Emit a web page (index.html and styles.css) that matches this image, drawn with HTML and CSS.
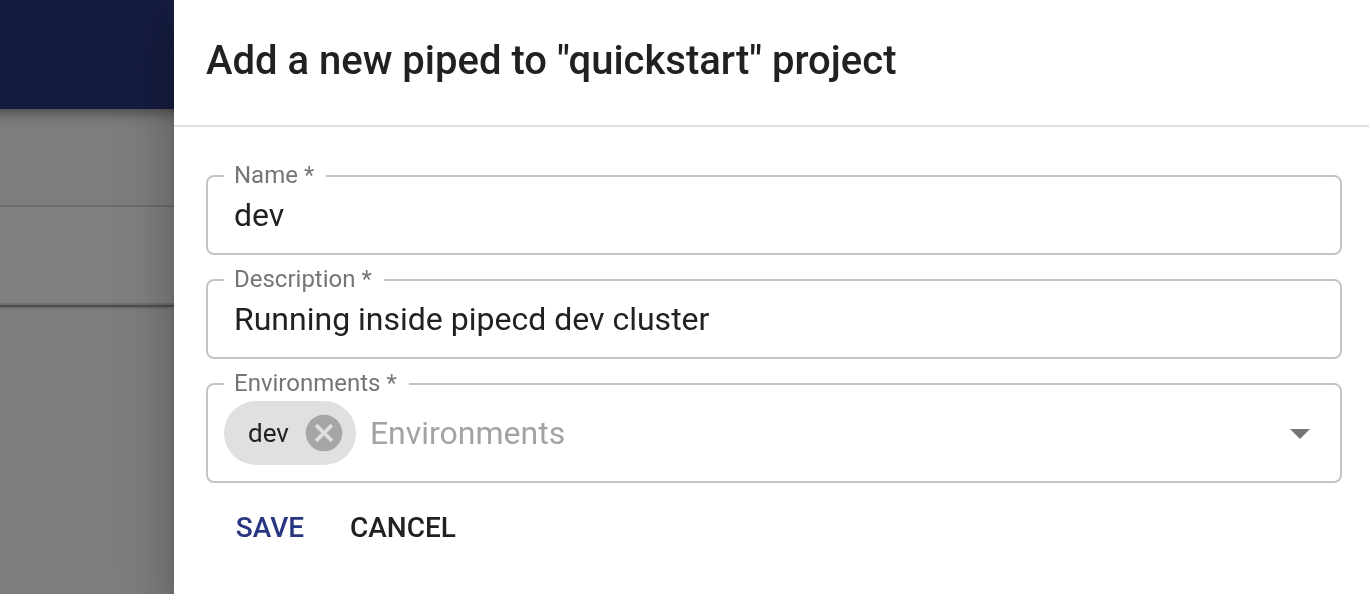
FILE: index.html
```html
<!DOCTYPE html>
<html lang="en">
<head>
<meta charset="utf-8">
<meta name="viewport" content="width=device-width, initial-scale=1">
<title>Add a new piped</title>
<link rel="stylesheet" href="styles.css">
</head>
<body>
<div class="page">
  <header class="app-bar"></header>
  <div class="toolbar"></div>
  <div class="list-head"></div>
</div>
<div class="backdrop"></div>
<main class="drawer" role="dialog" aria-labelledby="drawer-title">
  <h1 class="drawer-title" id="drawer-title">Add a new piped to "quickstart" project</h1>
  <form class="form">
    <fieldset class="field">
      <legend class="field-legend"><label for="name">Name *</label></legend>
      <input class="field-input" id="name" type="text" value="dev">
    </fieldset>
    <fieldset class="field">
      <legend class="field-legend"><label for="description">Description *</label></legend>
      <input class="field-input" id="description" type="text" value="Running inside pipecd dev cluster">
    </fieldset>
    <fieldset class="field">
      <legend class="field-legend"><label for="environments">Environments *</label></legend>
      <div class="select-row">
        <span class="chip">
          <span>dev</span>
          <button class="icon-button" type="button" aria-label="Remove dev">
            <svg class="chip-icon" viewBox="0 0 24 24" aria-hidden="true"><path d="M12 2C6.47 2 2 6.47 2 12s4.47 10 10 10 10-4.47 10-10S17.53 2 12 2zm5 13.59L15.59 17 12 13.41 8.41 17 7 15.59 10.59 12 7 8.41 8.41 7 12 10.59 15.59 7 17 8.41 13.41 12 17 15.59z"/></svg>
          </button>
        </span>
        <input class="select-input" id="environments" type="text" placeholder="Environments">
        <button class="icon-button" type="button" aria-label="Open">
          <svg class="arrow-icon" viewBox="0 0 24 24" aria-hidden="true"><path d="M7 10l5 5 5-5z"/></svg>
        </button>
      </div>
    </fieldset>
    <div class="actions">
      <button class="button button-primary" type="submit">SAVE</button>
      <button class="button" type="button">CANCEL</button>
    </div>
  </form>
</main>
</body>
</html>
```
FILE: styles.css
```css
* {
  box-sizing: border-box;
}

body {
  margin: 0;
  font-family: Roboto, "Liberation Sans", sans-serif;
  color: #212121;
  background: #fafafa;
  overflow: hidden;
}

.page {
  display: flex;
  flex-direction: column;
  min-height: 100vh;
  margin: 0 -24px;
}

.app-bar {
  height: 109px;
  background: #2c387e;
  box-shadow: 0 4px 8px -2px rgba(0, 0, 0, 0.2), 0 8px 10px rgba(0, 0, 0, 0.14), 0 2px 20px rgba(0, 0, 0, 0.12);
  z-index: 1;
}

.toolbar {
  height: 98px;
  border-bottom: 2px solid #dcdcdc;
}

.list-head {
  height: 98px;
  background: #fff;
  border-bottom: 2px solid #dcdcdc;
  box-shadow: 0 2px 2px rgba(0, 0, 0, 0.4), 0 2px 6px rgba(0, 0, 0, 0.12);
}

.backdrop {
  position: fixed;
  inset: 0;
  z-index: 2;
  background: rgba(0, 0, 0, 0.5);
}

.drawer {
  position: fixed;
  inset: 0 0 0 174px;
  z-index: 3;
  background: #fff;
  box-shadow: 0 16px 20px -10px rgba(0, 0, 0, 0.2), 0 32px 48px 4px rgba(0, 0, 0, 0.14), 0 12px 60px 10px rgba(0, 0, 0, 0.12);
}

.drawer-title {
  margin: 0;
  padding: 29px 32px 32px;
  border-bottom: 2px solid #e0e0e0;
  font-size: 40px;
  font-weight: 500;
  line-height: 64px;
}

.form {
  display: flex;
  flex-direction: column;
  gap: 12px;
  padding: 36px 27px 28px 32px;
}

.field {
  min-width: 0;
  margin: 0;
  padding: 0 16px;
  border: 2px solid #c4c4c4;
  border-radius: 8px;
}

.field-legend {
  padding: 0 12px 2px 10px;
  font-size: 24px;
  line-height: 24px;
  color: #757575;
}

.field-input,
.select-input {
  width: 100%;
  min-width: 0;
  border: 0;
  outline: 0;
  background: none;
  font: inherit;
  font-size: 32px;
  line-height: 40px;
  color: inherit;
}

.field-input {
  display: block;
  height: 64px;
  padding: 6px 10px 18px;
}

.select-row {
  display: flex;
  align-items: center;
  padding: 4px 0 16px;
}

.select-input {
  flex: 1;
  height: 64px;
  padding: 0 14px;
}

.select-input::placeholder {
  color: #a3a3a3;
  opacity: 1;
}

.chip {
  display: flex;
  align-items: center;
  gap: 13px;
  height: 64px;
  padding: 0 10px 0 24px;
  border-radius: 32px;
  background: #e0e0e0;
  font-size: 26px;
}

.icon-button {
  display: flex;
  padding: 0;
  border: 0;
  background: none;
}

.chip-icon {
  width: 44px;
  height: 44px;
  fill: #a6a6a6;
}

.arrow-icon {
  width: 48px;
  height: 48px;
  fill: #757575;
}

.actions {
  display: flex;
  margin-top: -3px;
}

.button {
  min-width: 128px;
  padding: 12px 16px;
  border: 0;
  border-radius: 8px;
  background: none;
  font: inherit;
  font-size: 28px;
  font-weight: 500;
  line-height: 48px;
  color: inherit;
}

.button-primary {
  color: #283580;
}
```
